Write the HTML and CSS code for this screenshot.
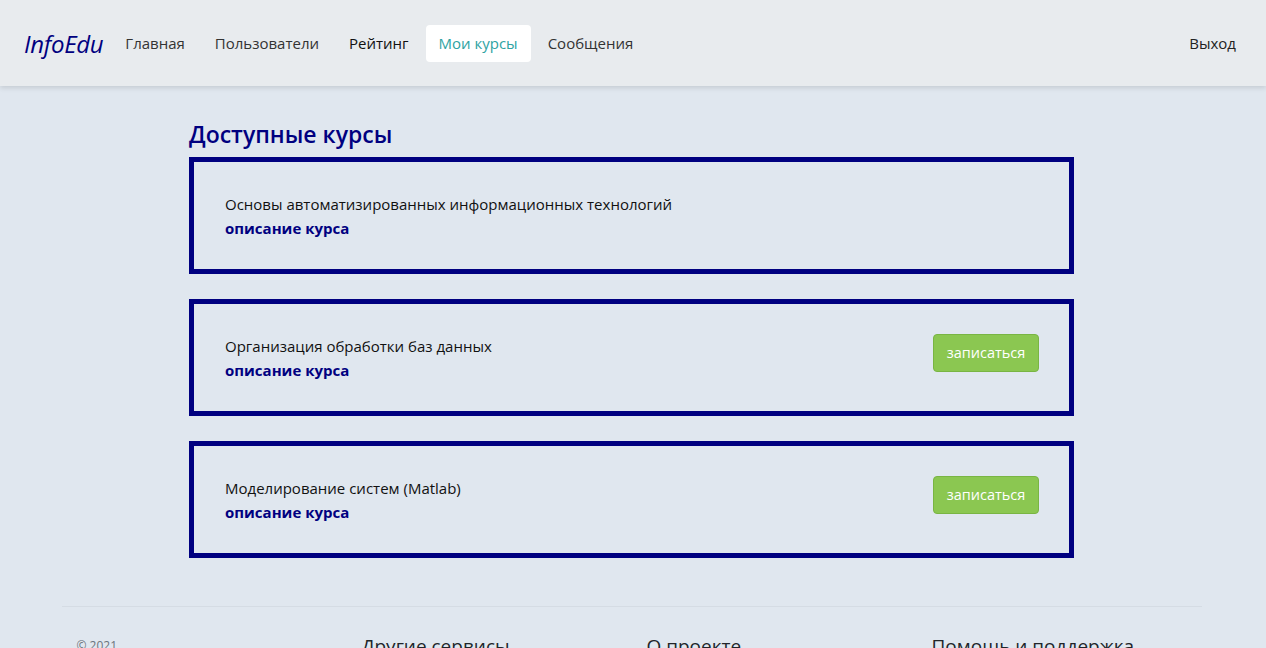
FILE: index.html
```html
<!DOCTYPE html>
<html lang="ru">
<head>
<meta charset="utf-8">
<title>InfoEdu — Мои курсы</title>
<link rel="stylesheet" href="styles.css">
</head>
<body>
<header class="navbar">
  <a class="brand" href="#">InfoEdu</a>
  <nav class="nav">
    <a class="nav-link" href="#">Главная</a>
    <a class="nav-link" href="#">Пользователи</a>
    <a class="nav-link dark" href="#">Рейтинг</a>
    <a class="nav-link active" href="#">Мои курсы</a>
    <a class="nav-link" href="#">Сообщения</a>
  </nav>
  <a class="nav-link logout" href="#">Выход</a>
</header>

<main class="main">
  <h2 class="title">Доступные курсы</h2>
  <div class="card">
    <div class="card-text">
      <div class="course-name">Основы автоматизированных информационных технологий</div>
      <a class="course-desc" href="#">описание курса</a>
    </div>
  </div>
  <div class="card">
    <div class="card-text">
      <div class="course-name">Организация обработки баз данных</div>
      <a class="course-desc" href="#">описание курса</a>
    </div>
    <button class="btn">записаться</button>
  </div>
  <div class="card">
    <div class="card-text">
      <div class="course-name">Моделирование систем (Matlab)</div>
      <a class="course-desc" href="#">описание курса</a>
    </div>
    <button class="btn">записаться</button>
  </div>
</main>

<footer class="footer">
  <div class="footer-row">
    <div class="col"><small class="muted">© 2021</small></div>
    <div class="col"><h5 class="fh">Другие сервисы</h5></div>
    <div class="col"><h5 class="fh">О проекте</h5></div>
    <div class="col"><h5 class="fh">Помощь и поддержка</h5></div>
  </div>
</footer>
</body>
</html>
```

FILE: styles.css
```css
* { box-sizing: border-box; }
html, body { margin: 0; padding: 0; }
body {
  background: #e0e7ef;
  font-family: "Open Sans", "Noto Sans", sans-serif;
  font-size: 15px;
  color: #212529;
  padding-right: 3px;
}
a { text-decoration: none; }

.navbar {
  height: 86px;
  background: #e8ebee;
  box-shadow: 0 2px 5px rgba(0, 0, 0, 0.12);
  display: flex;
  align-items: center;
  padding: 0 30px 0 24px;
  margin-right: -3px;
  position: relative;
}
.brand {
  font-size: 24px;
  font-style: italic;
  color: #000080;
  margin-right: 9px;
  letter-spacing: -0.3px;
}
.nav { display: flex; gap: 4px; flex: 1; }
.nav-link {
  display: block;
  height: 37px;
  line-height: 37px;
  padding: 0 13px;
  border-radius: 4px;
  color: #333;
  font-size: 15px;
}
.nav-link.dark { color: #111; }
.nav-link.active { background: #fff; color: #2ea3a3; }
.logout { padding: 0; color: #222; }

.main {
  width: 885px;
  margin: 0 auto;
  padding-top: 34px;
  padding-bottom: 48px;
}
.title {
  margin: 0 0 8px;
  font-size: 23px;
  line-height: 29px;
  font-weight: 600;
  color: #000080;
}
.card {
  height: 117px;
  border: 5px solid #000080;
  display: flex;
  align-items: center;
  justify-content: space-between;
  padding: 0 30px 0 31px;
  margin-bottom: 25px;
}
.card:last-child { margin-bottom: 0; }
.course-name { color: #111; line-height: 24px; }
.course-desc { color: #000080; font-weight: 700; line-height: 24px; }
.btn {
  width: 106px;
  height: 38px;
  margin-bottom: 10px;
  background: #8bc751;
  border: 1px solid #79b543;
  border-radius: 4px;
  color: #fff;
  font-family: inherit;
  font-size: 14.5px;
  padding: 0;
}

.footer {
  width: 1140px;
  margin: 0 auto;
  border-top: 1px solid #d5dce4;
  padding: 0;
}
.footer-row { display: flex; padding-top: 26px; }
.col { flex: 1; padding: 0 15px; }
.muted { color: #6c757d; font-size: 12px; display: block; padding-top: 4px; }
.fh {
  margin: 0;
  font-size: 19px;
  font-weight: 500;
  color: #212529;
}
```
